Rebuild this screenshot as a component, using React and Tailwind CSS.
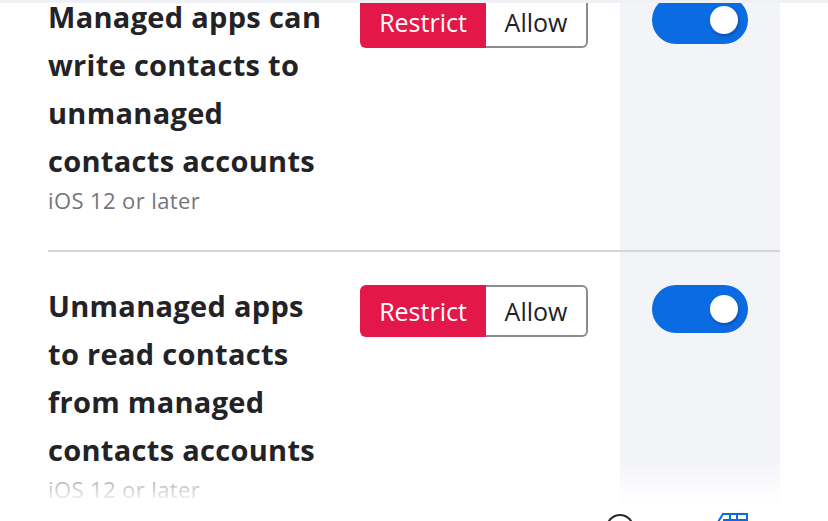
import React from "react";

function Segmented() {
  return (
    <div className="mt-[3px] flex h-[52px] w-[228px]">
      <div className="flex w-[126px] items-center justify-center rounded-l-[6px] bg-[#e4174a] text-[25px] leading-none text-white">
        Restrict
      </div>
      <div className="flex flex-1 items-center justify-center rounded-r-[6px] border-2 border-l-0 border-[#8c8c90] bg-white text-[25px] leading-none text-[#222226]">
        Allow
      </div>
    </div>
  );
}

function Toggle() {
  return (
    <div className="mt-[3px] flex h-[48px] w-[96px] items-center justify-end rounded-full bg-[#0b6be2] pr-[10px]">
      <div className="h-[28px] w-[28px] rounded-full bg-white shadow-[1px_2px_3px_rgba(0,0,0,0.25)]" />
    </div>
  );
}

function Row({ lines, last }) {
  return (
    <div
      className={
        "grid grid-cols-[312px_260px_160px] " +
        (last ? "" : "border-b-2 border-[#d6d6d9]")
      }
    >
      <div className={"pt-[30px] " + (last ? "pb-[80px]" : "pb-[35px]")}>
        <div className="w-[284px] text-[29px] font-bold leading-[48px] tracking-[0.3px] text-[#232327]">
          {lines}
        </div>
        <div className="text-[22px] leading-[30px] tracking-[0.4px] text-[#74757a]">iOS 12 or later</div>
      </div>
      <div className="pt-[30px]">
        <Segmented />
      </div>
      <div className="flex justify-center bg-[#f3f4f8] pt-[30px]">
        <Toggle />
      </div>
    </div>
  );
}

export default function App() {
  return (
    <div
      className="relative h-[521px] w-[828px] overflow-hidden bg-white"
      style={{ fontFamily: "'Open Sans', 'Liberation Sans', sans-serif" }}
    >
      <div className="ml-[48px] mt-[-37px] w-[732px]">
        <Row lines="Managed apps can write contacts to unmanaged contacts accounts" />
        <Row lines="Unmanaged apps to read contacts from managed contacts accounts" last />
      </div>

      <div className="absolute left-0 right-0 top-0 h-[3px] bg-[#f0f1f5]" />

      <div className="absolute bottom-0 left-0 right-0 h-[61px] bg-gradient-to-b from-white/0 to-white to-[73%]" />

      <div className="absolute left-[606px] top-[514px] h-[28px] w-[28px] rounded-full border-2 border-[#2a2a2e]" />
      <svg
        className="absolute left-[717px] top-[513px]"
        width="32"
        height="30"
        viewBox="0 0 32 30"
        fill="none"
        stroke="#0b6be2"
        strokeWidth="2"
      >
        <path d="M1 9 L6 1 H30 V29 H1 Z" />
        <path d="M13 1 V7 M20 1 V7 M6 7 H30" />
      </svg>
    </div>
  );
}
